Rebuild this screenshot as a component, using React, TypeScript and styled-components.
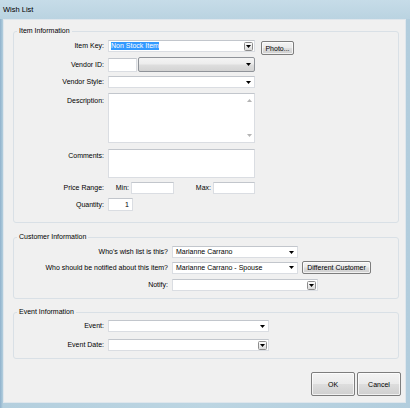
import React from 'react';
import styled, { createGlobalStyle } from 'styled-components';

const Global = createGlobalStyle`
  html, body { margin: 0; padding: 0; background: #ffffff; }
  body {
    font-family: 'Liberation Sans', Arial, sans-serif;
    font-size: 7px;
    color: #000;
  }
  * { box-sizing: border-box; }
`;

const Window = styled.div`
  width: 410px;
  height: 408px;
  display: flex;
  flex-direction: column;
  background: linear-gradient(to right, #8fb2cc 0px, #b4cfde 3px, #bcd5e2 50%, #b2cddd 100%);
`;

const TitleBar = styled.div`
  height: 19px;
  flex-shrink: 0;
  display: flex;
  align-items: center;
  padding-left: 3px;
  font-size: 7.5px;
  color: #000;
  background: linear-gradient(to bottom, #c6dce8 0%, #bad3e1 100%);
`;

const Client = styled.div`
  flex: 1;
  margin: 0 4px 5px 3px;
  background: #f0f0f0;
  border: 1px solid #dfe6ec;
  padding: 7px 6px 0 9px;
  display: flex;
  flex-direction: column;
`;

const GroupBox = styled.fieldset<{ $pt: number; $pb: number; $mt?: number }>`
  margin: ${p => p.$mt ?? 0}px 0 0 0;
  padding: ${p => p.$pt}px 0 ${p => p.$pb}px 0;
  border: 1px solid #d9e0e6;
  border-radius: 3px;
  min-width: 0;
  display: flex;
  flex-direction: column;
`;

const Caption = styled.legend`
  margin-left: 3px;
  padding: 0 2px;
  font-size: 7px;
  line-height: 8px;
  color: #000;
`;

const Row = styled.div<{ $mt?: number; $align?: string }>`
  display: flex;
  align-items: ${p => p.$align ?? 'center'};
  margin-top: ${p => p.$mt ?? 0}px;
`;

const Label = styled.div<{ $w: number; $pt?: number }>`
  width: ${p => p.$w}px;
  flex-shrink: 0;
  text-align: right;
  padding-right: 4px;
  padding-top: ${p => p.$pt ?? 0}px;
  line-height: 12px;
  font-size: 7px;
  white-space: nowrap;
`;

const InlineLabel = styled.div<{ $w: number }>`
  width: ${p => p.$w}px;
  flex-shrink: 0;
  text-align: right;
  padding-right: 2px;
  line-height: 12px;
  font-size: 7px;
`;

const Field = styled.div<{ $w: number; $h?: number; $right?: boolean }>`
  width: ${p => p.$w}px;
  height: ${p => p.$h ?? 12}px;
  flex-shrink: 0;
  display: flex;
  align-items: center;
  background: #ffffff;
  border: 1px solid #dadde2;
  border-top-color: #c2c6cc;
  padding-left: ${p => (p.$right ? 0 : 1)}px;
  padding-right: ${p => (p.$right ? 3 : 0)}px;
  justify-content: ${p => (p.$right ? 'flex-end' : 'flex-start')};
  font-size: 7px;
  line-height: 10px;
  white-space: nowrap;
  overflow: hidden;
`;

const MultiField = styled.div<{ $w: number; $h: number }>`
  width: ${p => p.$w}px;
  height: ${p => p.$h}px;
  flex-shrink: 0;
  display: flex;
  background: #ffffff;
  border: 1px solid #dadde2;
  border-top-color: #c2c6cc;
`;

const TextArea = styled.div`
  flex: 1;
`;

const ScrollCol = styled.div`
  width: 10px;
  display: flex;
  flex-direction: column;
  justify-content: space-between;
  align-items: center;
  padding: 5px 0 5px 0;
`;

const Value = styled.span<{ $pl?: number }>`
  flex: 1;
  padding-left: ${p => p.$pl ?? 1}px;
  overflow: hidden;
`;

const Selected = styled.span`
  background: #3399ff;
  color: #ffffff;
  line-height: 8px;
  display: inline-block;
  padding-right: 0.5px;
`;

const DropBox = styled.span`
  width: 9px;
  height: 9px;
  margin-right: 1px;
  flex-shrink: 0;
  border: 1px solid #8c8c8c;
  border-radius: 1.5px;
  background: linear-gradient(to bottom, #fbfbfb 0%, #ededed 50%, #dadada 100%);
  display: flex;
  align-items: center;
  justify-content: center;
`;

const PlainDrop = styled.span`
  margin-right: 3px;
  display: flex;
  align-items: center;
  flex-shrink: 0;
`;

const GreyCombo = styled.div<{ $w: number; $h: number }>`
  width: ${p => p.$w}px;
  height: ${p => p.$h}px;
  flex-shrink: 0;
  margin-left: 1px;
  display: flex;
  align-items: center;
  justify-content: flex-end;
  padding-right: 3px;
  border: 1px solid #8f9399;
  border-radius: 2px;
  background: linear-gradient(to bottom, #f4f4f4 0%, #ececec 48%, #dedede 52%, #d3d3d3 100%);
`;

const Button = styled.button<{ $w: number; $h: number; $ml?: number; $mt?: number }>`
  width: ${p => p.$w}px;
  height: ${p => p.$h}px;
  margin: ${p => p.$mt ?? 0}px 0 0 ${p => p.$ml ?? 0}px;
  padding: 0;
  flex-shrink: 0;
  align-self: ${p => (p.$mt ? 'flex-start' : 'center')};
  font-family: 'Liberation Sans', Arial, sans-serif;
  font-size: 7px;
  color: #000;
  border: 1px solid #7d7d7d;
  border-radius: 2px;
  background: linear-gradient(to bottom, #f3f3f3 0%, #ebebeb 48%, #dddddd 52%, #cfcfcf 100%);
  box-shadow: inset 0 0 0 1px rgba(255, 255, 255, 0.7);
`;

const Footer = styled.div`
  display: flex;
  justify-content: flex-end;
  gap: 2px;
  margin-top: 13px;
  margin-right: -2px;
`;

const Arrow = ({ up, color = '#000' }: { up?: boolean; color?: string }) => (
  <svg width="5" height="3" viewBox="0 0 5 3" style={{ display: 'block' }}>
    <path d={up ? 'M0 3 L5 3 L2.5 0 Z' : 'M0 0 L5 0 L2.5 3 Z'} fill={color} />
  </svg>
);

const EditCombo = ({ w, h = 12, children }: { w: number; h?: number; children?: React.ReactNode }) => (
  <Field $w={w} $h={h}>
    <Value>{children}</Value>
    <DropBox>
      <Arrow />
    </DropBox>
  </Field>
);

const ListCombo = ({ w, h = 12, children }: { w: number; h?: number; children?: React.ReactNode }) => (
  <Field $w={w} $h={h}>
    <Value $pl={2}>{children}</Value>
    <PlainDrop>
      <Arrow />
    </PlainDrop>
  </Field>
);

export default function App() {
  return (
    <>
      <Global />
      <Window>
        <TitleBar>Wish List</TitleBar>
        <Client>
          <GroupBox $pt={5} $pb={11}>
            <Caption>Item Information</Caption>
            <Row $align="flex-start">
              <Label $w={94}>Item Key:</Label>
              <EditCombo w={147}>
                <Selected>Non Stock Item</Selected>
              </EditCombo>
              <Button $w={33} $h={14} $ml={6} $mt={1}>Photo...</Button>
            </Row>
            <Row $mt={2}>
              <Label $w={94}>Vendor ID:</Label>
              <Field $w={29} $h={14} />
              <GreyCombo $w={117} $h={15}>
                <Arrow />
              </GreyCombo>
            </Row>
            <Row $mt={4}>
              <Label $w={94}>Vendor Style:</Label>
              <ListCombo w={147} />
            </Row>
            <Row $mt={5} $align="flex-start">
              <Label $w={94} $pt={2}>Description:</Label>
              <MultiField $w={147} $h={50}>
                <TextArea />
                <ScrollCol>
                  <Arrow up color="#b4b4b4" />
                  <Arrow color="#b4b4b4" />
                </ScrollCol>
              </MultiField>
            </Row>
            <Row $mt={6} $align="flex-start">
              <Label $w={94} $pt={1}>Comments:</Label>
              <MultiField $w={147} $h={29}>
                <TextArea />
              </MultiField>
            </Row>
            <Row $mt={4}>
              <Label $w={94}>Price Range:</Label>
              <InlineLabel $w={23}>Min:</InlineLabel>
              <Field $w={43} $h={12} />
              <InlineLabel $w={39}>Max:</InlineLabel>
              <Field $w={42} $h={12} />
            </Row>
            <Row $mt={4}>
              <Label $w={94}>Quantity:</Label>
              <Field $w={25} $h={13} $right>1</Field>
            </Row>
          </GroupBox>

          <GroupBox $pt={5} $pb={7} $mt={10}>
            <Caption>Customer Information</Caption>
            <Row>
              <Label $w={158}>Who's wish list is this?</Label>
              <ListCombo w={126}>Marianne Carrano</ListCombo>
            </Row>
            <Row $mt={3}>
              <Label $w={158}>Who should be notified about this item?</Label>
              <ListCombo w={126}>Marianne Carrano - Spouse</ListCombo>
              <Button $w={69} $h={13} $ml={4}>Different Customer</Button>
            </Row>
            <Row $mt={5}>
              <Label $w={158}>Notify:</Label>
              <EditCombo w={146} />
            </Row>
          </GroupBox>

          <GroupBox $pt={4} $pb={7} $mt={9}>
            <Caption>Event Information</Caption>
            <Row>
              <Label $w={94}>Event:</Label>
              <ListCombo w={161} />
            </Row>
            <Row $mt={7}>
              <Label $w={94}>Event Date:</Label>
              <EditCombo w={161} />
            </Row>
          </GroupBox>

          <Footer>
            <Button $w={44} $h={24}>OK</Button>
            <Button $w={44} $h={24}>Cancel</Button>
          </Footer>
        </Client>
      </Window>
    </>
  );
}
